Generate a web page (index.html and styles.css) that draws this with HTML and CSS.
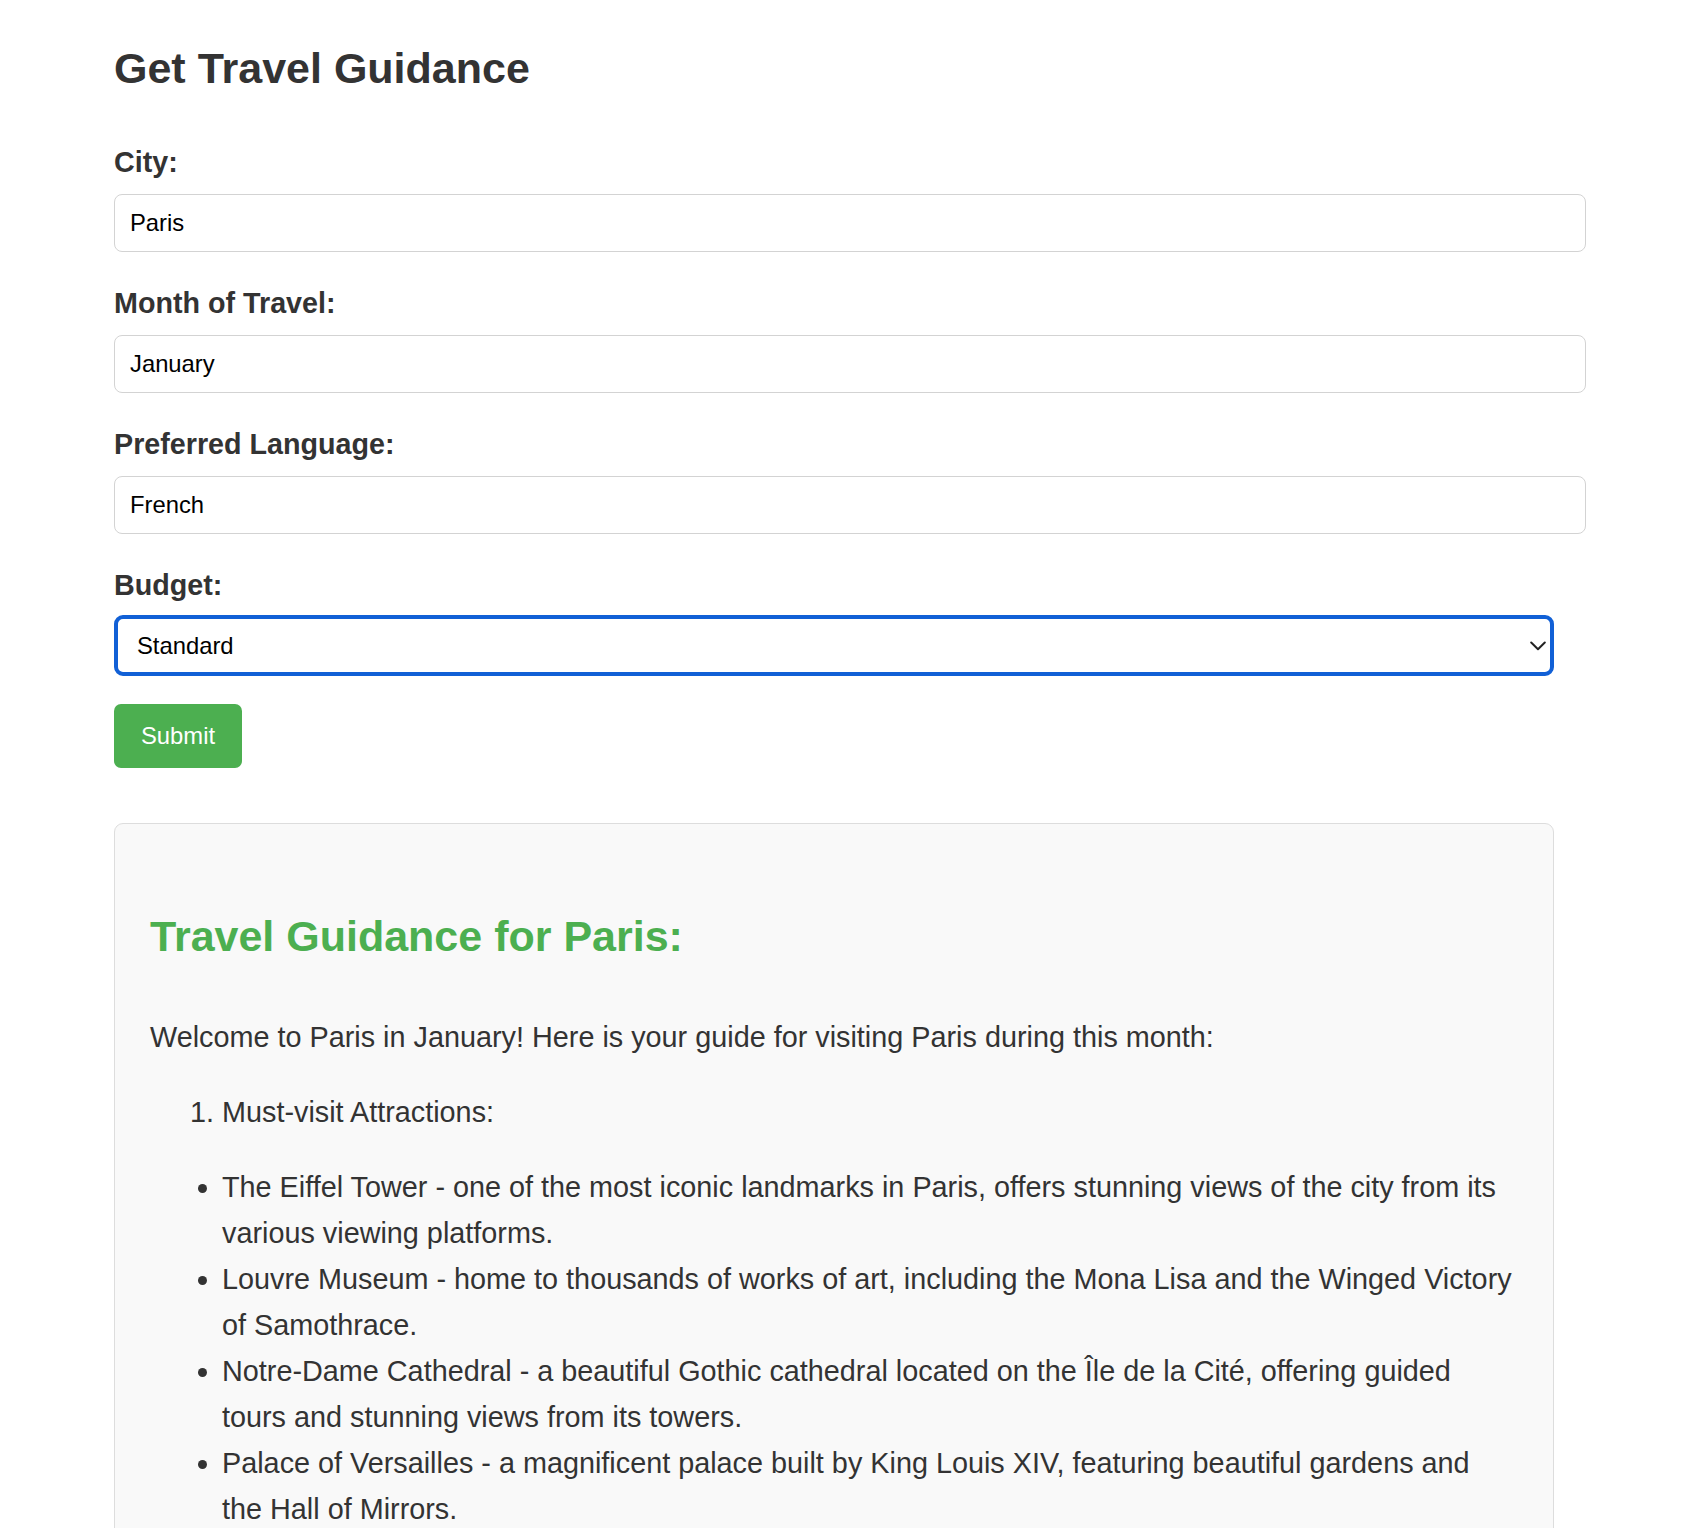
FILE: index.html
```html
<!DOCTYPE html>
<html lang="en">
<head>
<meta charset="utf-8">
<title>Get Travel Guidance</title>
<link rel="stylesheet" href="styles.css">
</head>
<body>
<div class="page">
  <h1 class="title">Get Travel Guidance</h1>
  <form class="form">
    <div class="field">
      <label class="label" for="city">City:</label>
      <input class="input" id="city" type="text" value="Paris">
    </div>
    <div class="field">
      <label class="label" for="month">Month of Travel:</label>
      <input class="input" id="month" type="text" value="January">
    </div>
    <div class="field">
      <label class="label" for="lang">Preferred Language:</label>
      <input class="input" id="lang" type="text" value="French">
    </div>
    <div class="field field-select">
      <label class="label label-select" for="budget">Budget:</label>
      <div class="select-wrap">
        <select class="select" id="budget">
          <option>Standard</option>
          <option>Budget</option>
          <option>Luxury</option>
        </select>
        <svg class="chevron" width="16" height="10" viewBox="0 0 16 10" aria-hidden="true">
          <path d="M1.2 1.5 L8 8.2 L14.8 1.5" fill="none" stroke="#222" stroke-width="2" stroke-linecap="round" stroke-linejoin="round"/>
        </svg>
      </div>
    </div>
    <button class="submit" type="button">Submit</button>
  </form>

  <div class="result">
    <h2 class="result-title">Travel Guidance for Paris:</h2>
    <p>Welcome to Paris in January! Here is your guide for visiting Paris during this month:</p>
    <ol>
      <li>Must-visit Attractions:</li>
    </ol>
    <ul>
      <li>The Eiffel Tower - one of the most iconic landmarks in Paris, offers stunning views of the city from its various viewing platforms.</li>
      <li>Louvre Museum - home to thousands of works of art, including the Mona Lisa and the Winged Victory of Samothrace.</li>
      <li>Notre-Dame Cathedral - a beautiful Gothic cathedral located on the Île de la Cité, offering guided tours and stunning views from its towers.</li>
      <li>Palace of Versailles - a magnificent palace built by King Louis XIV, featuring beautiful gardens and the Hall of Mirrors.</li>
    </ul>
  </div>
</div>
</body>
</html>
```

FILE: styles.css
```css
html, body {
  margin: 0;
  padding: 0;
  background: #ffffff;
}

body {
  font-family: "Liberation Sans", Arial, Helvetica, sans-serif;
  color: #333333;
}

.page {
  width: 1440px;
  margin-left: 114px;
  padding-bottom: 40px;
}

.title {
  font-size: 43px;
  font-weight: bold;
  line-height: normal;
  color: #333333;
  margin: 44px 0 53px;
}

.form {
  margin: 0;
}

.field {
  margin-bottom: 35px;
}

.field-select {
  margin-bottom: 28px;
}

.label {
  display: block;
  font-size: 28.7px;
  font-weight: bold;
  line-height: normal;
  color: #333333;
  margin-bottom: 15px;
}

.label-select {
  margin-bottom: 13px;
}

.input {
  display: block;
  width: 100%;
  box-sizing: content-box;
  height: 28px;
  padding: 14px 15px;
  border: 1px solid #d3d3d3;
  border-radius: 8px;
  font-family: "Liberation Sans", Arial, Helvetica, sans-serif;
  font-size: 23.8px;
  color: #000000;
  background: #ffffff;
  outline: none;
}

.select-wrap {
  position: relative;
}

.select {
  display: block;
  width: 100%;
  height: 61px;
  box-sizing: border-box;
  -webkit-appearance: none;
  appearance: none;
  border: 4px solid #1160d6;
  border-radius: 9px;
  padding: 0 60px 0 19px;
  font-family: "Liberation Sans", Arial, Helvetica, sans-serif;
  font-size: 23.8px;
  color: #000000;
  background: #ffffff;
  outline: none;
}

.chevron {
  position: absolute;
  right: 8px;
  top: 26px;
  pointer-events: none;
}

.submit {
  display: block;
  height: 64px;
  padding: 0 27px;
  border: none;
  border-radius: 7px;
  background: #4caf50;
  color: #ffffff;
  font-family: "Liberation Sans", Arial, Helvetica, sans-serif;
  font-size: 23.8px;
  cursor: pointer;
}

.result {
  margin-top: 55px;
  border: 1px solid #dddddd;
  border-radius: 9px;
  background: #f9f9f9;
  padding: 35px 39px 35px 35px;
  font-size: 28.8px;
  line-height: 46px;
  color: #333333;
}

.result-title {
  font-size: 43px;
  font-weight: bold;
  line-height: normal;
  color: #4caf50;
  margin: 53px 0 53px;
}

.result p {
  margin: 28.8px 0;
}

.result ol,
.result ul {
  margin: 28.8px 0;
  padding-left: 72px;
}
```
